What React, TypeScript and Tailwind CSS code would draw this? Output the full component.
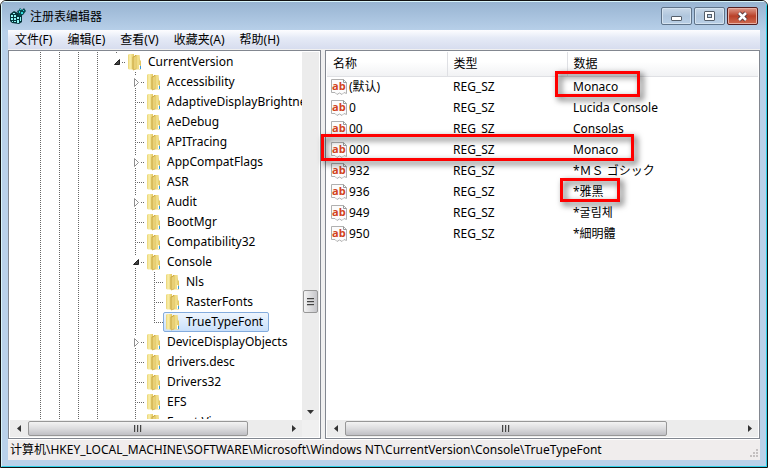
import React from "react";

type Expander = "open" | "closed" | "none";
type Row = { label: string; depth: number; expander: Expander; last?: boolean; selected?: boolean };

const ROWS: Row[] = [
  { label: "CurrentVersion", depth: 0, expander: "open" },
  { label: "Accessibility", depth: 1, expander: "closed" },
  { label: "AdaptiveDisplayBrightness", depth: 1, expander: "none" },
  { label: "AeDebug", depth: 1, expander: "none" },
  { label: "APITracing", depth: 1, expander: "none" },
  { label: "AppCompatFlags", depth: 1, expander: "closed" },
  { label: "ASR", depth: 1, expander: "none" },
  { label: "Audit", depth: 1, expander: "closed" },
  { label: "BootMgr", depth: 1, expander: "none" },
  { label: "Compatibility32", depth: 1, expander: "none" },
  { label: "Console", depth: 1, expander: "open" },
  { label: "Nls", depth: 2, expander: "none" },
  { label: "RasterFonts", depth: 2, expander: "none" },
  { label: "TrueTypeFont", depth: 2, expander: "none", last: true, selected: true },
  { label: "DeviceDisplayObjects", depth: 1, expander: "closed" },
  { label: "drivers.desc", depth: 1, expander: "none" },
  { label: "Drivers32", depth: 1, expander: "none" },
  { label: "EFS", depth: 1, expander: "none" },
  { label: "Event Viewer", depth: 1, expander: "none" },
];

const VALUES = [
  { name: "(默认)", data: "Monaco" },
  { name: "0", data: "Lucida Console" },
  { name: "00", data: "Consolas" },
  { name: "000", data: "Monaco" },
  { name: "932", data: "*ＭＳ ゴシック" },
  { name: "936", data: "*雅黑" },
  { name: "949", data: "*굴림체" },
  { name: "950", data: "*細明體" },
];

const MENUS = ["文件(F)", "编辑(E)", "查看(V)", "收藏夹(A)", "帮助(H)"];

function Guide() {
  return (
    <svg width="19" height="20" className="shrink-0" shapeRendering="crispEdges" aria-hidden="true">
      <path d="M9.5 0V20" stroke="#666" strokeDasharray="1 1" />
    </svg>
  );
}

function Node({ row }: { row: Row }) {
  if (row.expander === "none") {
    return (
      <svg width="19" height="20" className="shrink-0" shapeRendering="crispEdges" aria-hidden="true">
        <path d={row.last ? "M9.5 0V11" : "M9.5 0V20"} stroke="#666" strokeDasharray="1 1" />
        <path d="M11 10.5H19" stroke="#666" strokeDasharray="1 1" />
      </svg>
    );
  }
  return (
    <svg width="19" height="20" className="shrink-0" aria-hidden="true">
      <g shapeRendering="crispEdges" stroke="#666" strokeDasharray="1 1">
        <path d={row.depth > 0 ? "M9.5 0V4" : "M9.5 0V2"} />
        {row.depth > 0 && <path d="M9.5 16V20" />}
        <path d="M15 10.5H19" />
      </g>
      {row.expander === "open" ? (
        <path d="M12.5 7.5V12.5H7.5Z" fill="#444" stroke="#222" strokeWidth="1" />
      ) : (
        <path d="M8.5 6.5L12.5 10.5L8.5 14.5Z" fill="#fff" stroke="#909090" />
      )}
    </svg>
  );
}

function Folder() {
  return (
    <svg width="16" height="20" viewBox="0 0 16 20" className="shrink-0" aria-hidden="true">
      <defs>
        <linearGradient id="fold" x1="0" x2="1">
          <stop offset="0" stopColor="#e9d272" />
          <stop offset=".35" stopColor="#faf0ac" />
          <stop offset="1" stopColor="#e2c65e" />
        </linearGradient>
        <linearGradient id="leaf" x1="0" x2="1">
          <stop offset="0" stopColor="#d9b94e" />
          <stop offset=".5" stopColor="#f4e392" />
          <stop offset="1" stopColor="#dfc25c" />
        </linearGradient>
      </defs>
      <path d="M2 3L3 2H8V17.500H3L2 16.500Z" fill="url(#fold)" />
      <path d="M9 3H13.500L14 8L15 9V17.500H9Z" fill="url(#leaf)" />
      <path d="M6.500 5L10 3V17L7.500 18.500L6.500 17Z" fill="#c9a640" />
      <path d="M7.500 5.500L10 4V16.500L7.500 18Z" fill="#e8d077" />
      <path d="M13 13H14V17H13Z" fill="#fff" />
      <path d="M14 14H15V17H14Z" fill="#3a9bdc" />
    </svg>
  );
}

function StringIcon() {
  return (
    <svg width="16" height="16" viewBox="0 0 16 16" className="shrink-0" aria-hidden="true">
      <path d="M.5.5H12.5L15.5 3.5V14.5L13 13.5L11 15.5L8.500 14L6 15.500L4 13.500H.5Z" fill="#fcfcfc" stroke="#b0b0b0" />
      <path d="M12.500.5V3.500H15.500" fill="none" stroke="#999" />
      <text x="1" y="11" fontSize="11" fontWeight="700" fill="#d2431c" fontFamily="Open Sans, sans-serif">ab</text>
    </svg>
  );
}

function RegistryIcon() {
  return (
    <svg width="16" height="16" viewBox="0 0 16 16" aria-hidden="true">
      <path d="M0 6L4 3L8 5L10 5L12 7V14L9 16L2 15L0 13Z" fill="#04363c" />
      <path d="M1 7h2v2H1zM4 7h2v2H4zM7 9h2v2H7zM1 10h2v2H1zM4 10h2v2H4zM7 12h2v3H7zM2 13h1v1H2zM4 13h2v1H4zM3 5h2v1H3zM10 9h1v4h-1z" fill="#8ff5f5" />
      <path d="M7 3L9 2L10 0L12 2L14 0L16 3L13 7L9 8Z" fill="#064b50" />
      <path d="M9 3h1v2H9zM11 4h2v2h-2zM13 2h1v1h-1zM10 1h1v1h-1z" fill="#3dd" />
    </svg>
  );
}

function Arrow({ dir }: { dir: "left" | "right" | "down" }) {
  const d = { left: "M6 0V7L2 3.500Z", right: "M2 0V7L6 3.500Z", down: "M0 2H7L3.500 6Z" }[dir];
  return (
    <svg width="7" height="7" aria-hidden="true">
      <path d={d} fill="#333" />
    </svg>
  );
}

function HScroll({ thumb }: { thumb: string }) {
  return (
    <div className="flex h-[17px] bg-[#ececec]">
      <button aria-label="向左滚动" className="flex w-[17px] shrink-0 items-center justify-center"><Arrow dir="left" /></button>
      <div className="min-w-0 flex-1 py-px">
        <div className={`flex h-[15px] items-center justify-center gap-px rounded-[2px] border border-[#979797] bg-linear-to-b from-[#f3f3f3] from-0% via-[#dcdcde] via-50% to-[#bfbfc4] ${thumb}`}>
          {[0, 1, 2].map((i) => <span key={i} className="h-[7px] w-[2px] border-l border-[#444] bg-[#bbb]" />)}
        </div>
      </div>
      <button aria-label="向右滚动" className="flex w-[17px] shrink-0 items-center justify-center"><Arrow dir="right" /></button>
    </div>
  );
}

export default function App() {
  return (
    <div className="relative flex min-h-screen flex-col overflow-hidden rounded-t-[6px] border border-[#111] bg-[#b9d1ea] font-['Noto_Sans','Noto_Sans_CJK_SC','Noto_Sans_CJK_KR',sans-serif] text-[12px] text-black">
      <div className="flex flex-1 flex-col border border-[#d8f4fb] border-b-[#2fd0e8] border-r-[#2fd0e8] bg-linear-to-b from-[#98b4d2] to-[#b9d1ea] to-[30px] px-[6px] pb-[6px]">
        <header className="flex h-7 items-center pl-[2px]">
          <RegistryIcon />
          <h1 className="ml-1 pt-px">注册表编辑器</h1>
          <div className="ml-auto flex gap-[2px] pr-[2px]">
            <button aria-label="最小化" className="flex h-[18px] w-[31px] items-center justify-center rounded-[2px] border border-[#5f7389] bg-linear-to-b from-[#c9d8e8] via-[#b0c6dd] to-[#b9cfe6] shadow-[inset_0_0_0_1px_#d5e3f0]">
              <span className="mt-1 h-[5px] w-[11px] rounded-[1px] border border-[#555f6b] bg-white" />
            </button>
            <button aria-label="最大化" className="flex h-[18px] w-[31px] items-center justify-center rounded-[2px] border border-[#5f7389] bg-linear-to-b from-[#c9d8e8] via-[#b0c6dd] to-[#b9cfe6] shadow-[inset_0_0_0_1px_#d5e3f0]">
              <span className="flex h-[10px] w-[11px] items-center justify-center rounded-[1px] border border-[#555f6b] bg-white">
                <span className="h-1 w-[5px] border border-[#555f6b] bg-[#b9cfe6]" />
              </span>
            </button>
            <button aria-label="关闭" className="flex h-[18px] w-[31px] items-center justify-center rounded-[2px] border border-[#541f22] bg-linear-to-b from-[#dd9a8c] from-0% via-[#b94028] via-50% to-[#cf6a50] shadow-[inset_0_0_0_1px_#e8b0a4]">
              <svg width="13" height="11" viewBox="0 0 13 11" aria-hidden="true">
                <path d="M3 2L10 9M10 2L3 9" stroke="#54373c" strokeWidth="4.500" />
                <path d="M3 2L10 9M10 2L3 9" stroke="#fff" strokeWidth="2.500" />
              </svg>
            </button>
          </div>
        </header>

        <nav className="flex h-5 items-center gap-[15px] bg-linear-to-b from-[#fdfdff] from-0% via-[#e5eaf6] via-40% to-[#d6dcee] pl-[7px] shadow-[inset_0_-1px_0_#f0f0f0]">
          {MENUS.map((m) => <button key={m}>{m}</button>)}
        </nav>

        <main className="flex flex-1 bg-[#f0f0f0]">
          <section className="flex w-[313px] shrink-0 flex-col border border-[#828790] bg-white p-px">
            <div className="flex min-h-0 flex-1">
              <ul role="tree" className="h-[367px] min-w-0 flex-1 overflow-hidden pl-[21px]">
                {ROWS.map((row) => (
                  <li key={row.label} role="treeitem" aria-selected={!!row.selected} className="flex h-5 items-center whitespace-nowrap">
                    <Guide /><Guide /><Guide /><Guide />
                    {row.depth > 0 && <span className="w-[19px] shrink-0" />}
                    {row.depth > 1 && <Guide />}
                    <Node row={row} />
                    <span className={row.selected ? "-ml-px flex h-5 items-center rounded-[2px] border border-[#84acdd] bg-linear-to-b from-[#eef5fd] to-[#c9e0fb] pr-[5px]" : "flex h-5 items-center"}>
                      <Folder />
                      <span className="pl-[6px]">{row.label}</span>
                    </span>
                  </li>
                ))}
              </ul>
              <div className="flex w-[17px] flex-col items-center bg-[#ececec]">
                <div className="flex-1" />
                <div className="flex h-[23px] w-[15px] flex-col items-center justify-center gap-px rounded-[2px] border border-[#979797] bg-linear-to-r from-[#f3f3f3] to-[#c6c6ca]">
                  {[0, 1, 2].map((i) => <span key={i} className="h-[2px] w-[7px] border-t border-[#444] bg-[#bbb]" />)}
                </div>
                <div className="h-[90px]" />
                <button aria-label="向下滚动" className="flex h-[17px] w-[17px] items-center justify-center"><Arrow dir="down" /></button>
              </div>
            </div>
            <div className="flex">
              <div className="min-w-0 flex-1"><HScroll thumb="ml-px w-[220px]" /></div>
              <div className="w-[17px] bg-[#f0f0f0]" />
            </div>
          </section>

          <section className="ml-1 flex min-w-0 flex-1 flex-col border border-[#828790] bg-white p-px">
            <div className="flex-1">
              <table className="w-full table-fixed border-collapse text-left">
                <thead>
                  <tr className="h-6 bg-linear-to-b from-white from-40% to-[#f1f2f4]">
                    <th className="w-[120px] border-r border-b border-[#dfe0e4] pl-[6px] font-normal">名称</th>
                    <th className="w-[120px] border-r border-b border-[#dfe0e4] pl-[6px] font-normal">类型</th>
                    <th className="border-b border-[#dfe0e4] pl-[6px] font-normal">数据</th>
                  </tr>
                </thead>
                <tbody>
                  {VALUES.map((v) => (
                    <tr key={v.name} className="h-[21px]">
                      <td className="p-0 pl-1"><span className="flex h-[21px] items-center gap-[2px]"><StringIcon />{v.name}</span></td>
                      <td className="p-0 pl-[6px]">REG_SZ</td>
                      <td className="p-0 pl-[6px]">{v.data}</td>
                    </tr>
                  ))}
                </tbody>
              </table>
            </div>
            <HScroll thumb="ml-px w-[322px]" />
          </section>
        </main>

        <footer className="flex h-[21px] items-center justify-between border-t border-white bg-[#f0eded] pl-[2px] whitespace-nowrap">
          <span>计算机\HKEY_LOCAL_MACHINE\SOFTWARE\Microsoft\Windows NT\CurrentVersion\Console\TrueTypeFont</span>
          <svg width="10" height="10" className="mr-px mb-px self-end" aria-hidden="true">
            <path d="M7 0h2v2H7zM4 3h2v2H4zM7 3h2v2H7zM1 6h2v2H1zM4 6h2v2H4zM7 6h2v2H7z" fill="#c4c0c0" />
          </svg>
        </footer>
      </div>

      <div className="absolute top-[70px] left-[554px] h-[26px] w-[85px] border-[3px] border-[#f00] drop-shadow-[3px_3px_3px_rgba(0,0,0,0.7)]" />
      <div className="absolute top-[133px] left-[320px] h-[27px] w-[313px] border-[3px] border-[#f00] drop-shadow-[3px_3px_3px_rgba(0,0,0,0.7)]" />
      <div className="absolute top-[177px] left-[559px] h-[24px] w-[60px] border-[3px] border-[#f00] drop-shadow-[3px_3px_3px_rgba(0,0,0,0.7)]" />
    </div>
  );
}
